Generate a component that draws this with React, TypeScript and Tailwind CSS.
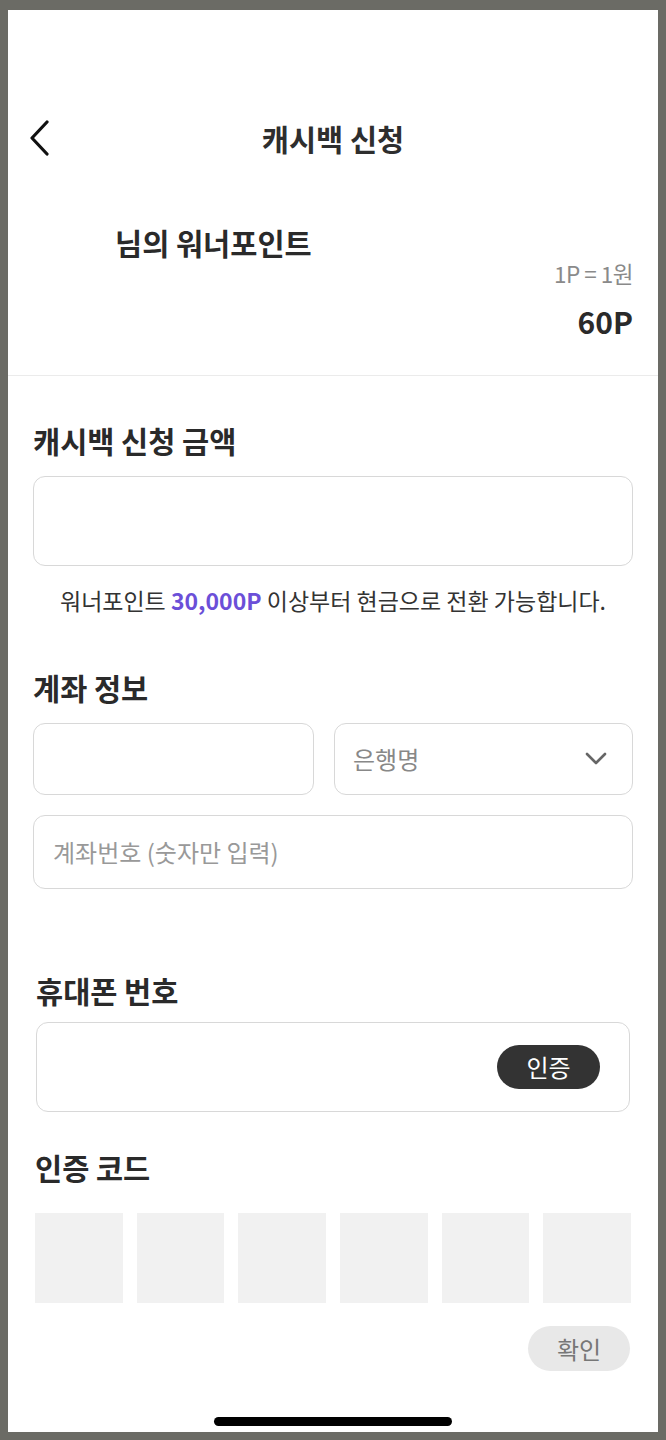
const font = { fontFamily: '"Noto Sans CJK KR", "Noto Sans", sans-serif' };

const BackIcon = () => (
  <svg width="22" height="36" viewBox="0 0 22 36" fill="none">
    <path d="M19 2 L4 18 L19 34" stroke="#111" strokeWidth="3.2" strokeLinecap="round" strokeLinejoin="round" />
  </svg>
);

const ChevronDown = () => (
  <svg width="22" height="14" viewBox="0 0 22 14" fill="none">
    <path d="M2 2 L11 11 L20 2" stroke="#666" strokeWidth="2.6" strokeLinecap="round" strokeLinejoin="round" />
  </svg>
);

const Label = ({ children, className = "" }: { children: React.ReactNode; className?: string }) => (
  <div className={`h-[36px] leading-[36px] text-[29.5px] font-bold text-[#2a2a2a] ${className}`}>
    {children}
  </div>
);

export default function App() {
  return (
    <div className="w-[666px] h-[1440px] bg-[#6b6b65] pt-[10px] px-[8px] pb-[8px]" style={font}>
      <div className="w-[650px] h-[1422px] bg-white flex flex-col">
        {/* header */}
        <div className="relative mt-[100px] h-[56px] flex items-center justify-center">
          <div className="absolute left-[20px] top-[10px]">
            <BackIcon />
          </div>
          <div className="text-[29.5px] font-bold text-[#2e2e2e]">캐시백 신청</div>
        </div>

        {/* points */}
        <div className="mt-[58px] pl-[107px] h-[36px] leading-[36px] text-[29.5px] font-bold text-[#2a2a2a]">
          님의 워너포인트
        </div>
        <div className="pr-[25px] h-[26px] leading-[26px] text-right text-[22.5px] text-[#8a8a8a] tracking-[-0.5px]">
          1P = 1원
        </div>
        <div className="mt-[17px] pr-[25px] h-[36px] leading-[36px] text-right text-[30px] font-bold text-[#2a2a2a]">
          60P
        </div>
        <div className="mt-[36px] h-px bg-[#ebebeb]" />

        {/* amount */}
        <div className="px-[25px]">
          <Label className="mt-[46px]">캐시백 신청 금액</Label>
          <div className="mt-[18px] h-[90px] rounded-[12px] border border-[#d8d8d8]" />
          <div className="mt-[20px] h-[28px] leading-[28px] text-center text-[23px] text-[#333]">
            워너포인트 <span className="font-bold text-[#6b4fd8]">30,000P</span> 이상부터 현금으로 전환 가능합니다.
          </div>

          {/* account */}
          <Label className="mt-[55px]">계좌 정보</Label>
          <div className="mt-[18px] grid grid-cols-[281px_1fr] gap-[20px]">
            <div className="h-[72px] rounded-[12px] border border-[#d8d8d8]" />
            <div className="h-[72px] rounded-[12px] border border-[#d8d8d8] flex items-center justify-between pl-[18px] pr-[25px]">
              <span className="text-[24px] text-[#888]">은행명</span>
              <ChevronDown />
            </div>
          </div>
          <div className="mt-[20px] h-[74px] rounded-[12px] border border-[#d8d8d8] flex items-center pl-[19px]">
            <span className="text-[24px] text-[#999]">계좌번호 (숫자만 입력)</span>
          </div>
        </div>

        {/* phone */}
        <div className="px-[28px]">
          <Label className="mt-[83px]">휴대폰 번호</Label>
          <div className="mt-[14px] h-[90px] rounded-[12px] border border-[#d8d8d8] flex items-center justify-end pr-[29px]">
            <button className="w-[103px] h-[44px] rounded-full bg-[#333] text-white text-[24px] leading-none">
              인증
            </button>
          </div>
        </div>

        {/* code */}
        <div className="px-[27px]">
          <Label className="mt-[37px]">인증 코드</Label>
          <div className="mt-[28px] grid grid-cols-6 gap-[14px]">
            {[0, 1, 2, 3, 4, 5].map((i) => (
              <div key={i} className="h-[90px] bg-[#f1f1f1]" />
            ))}
          </div>
          <div className="mt-[23px] flex justify-end pr-[1px]">
            <button className="w-[102px] h-[45px] rounded-full bg-[#e8e8e8] text-[#777] text-[24px] leading-none">
              확인
            </button>
          </div>
        </div>

        <div className="mt-[46px] mx-auto w-[238px] h-[9px] rounded-full bg-black" />
      </div>
    </div>
  );
}
